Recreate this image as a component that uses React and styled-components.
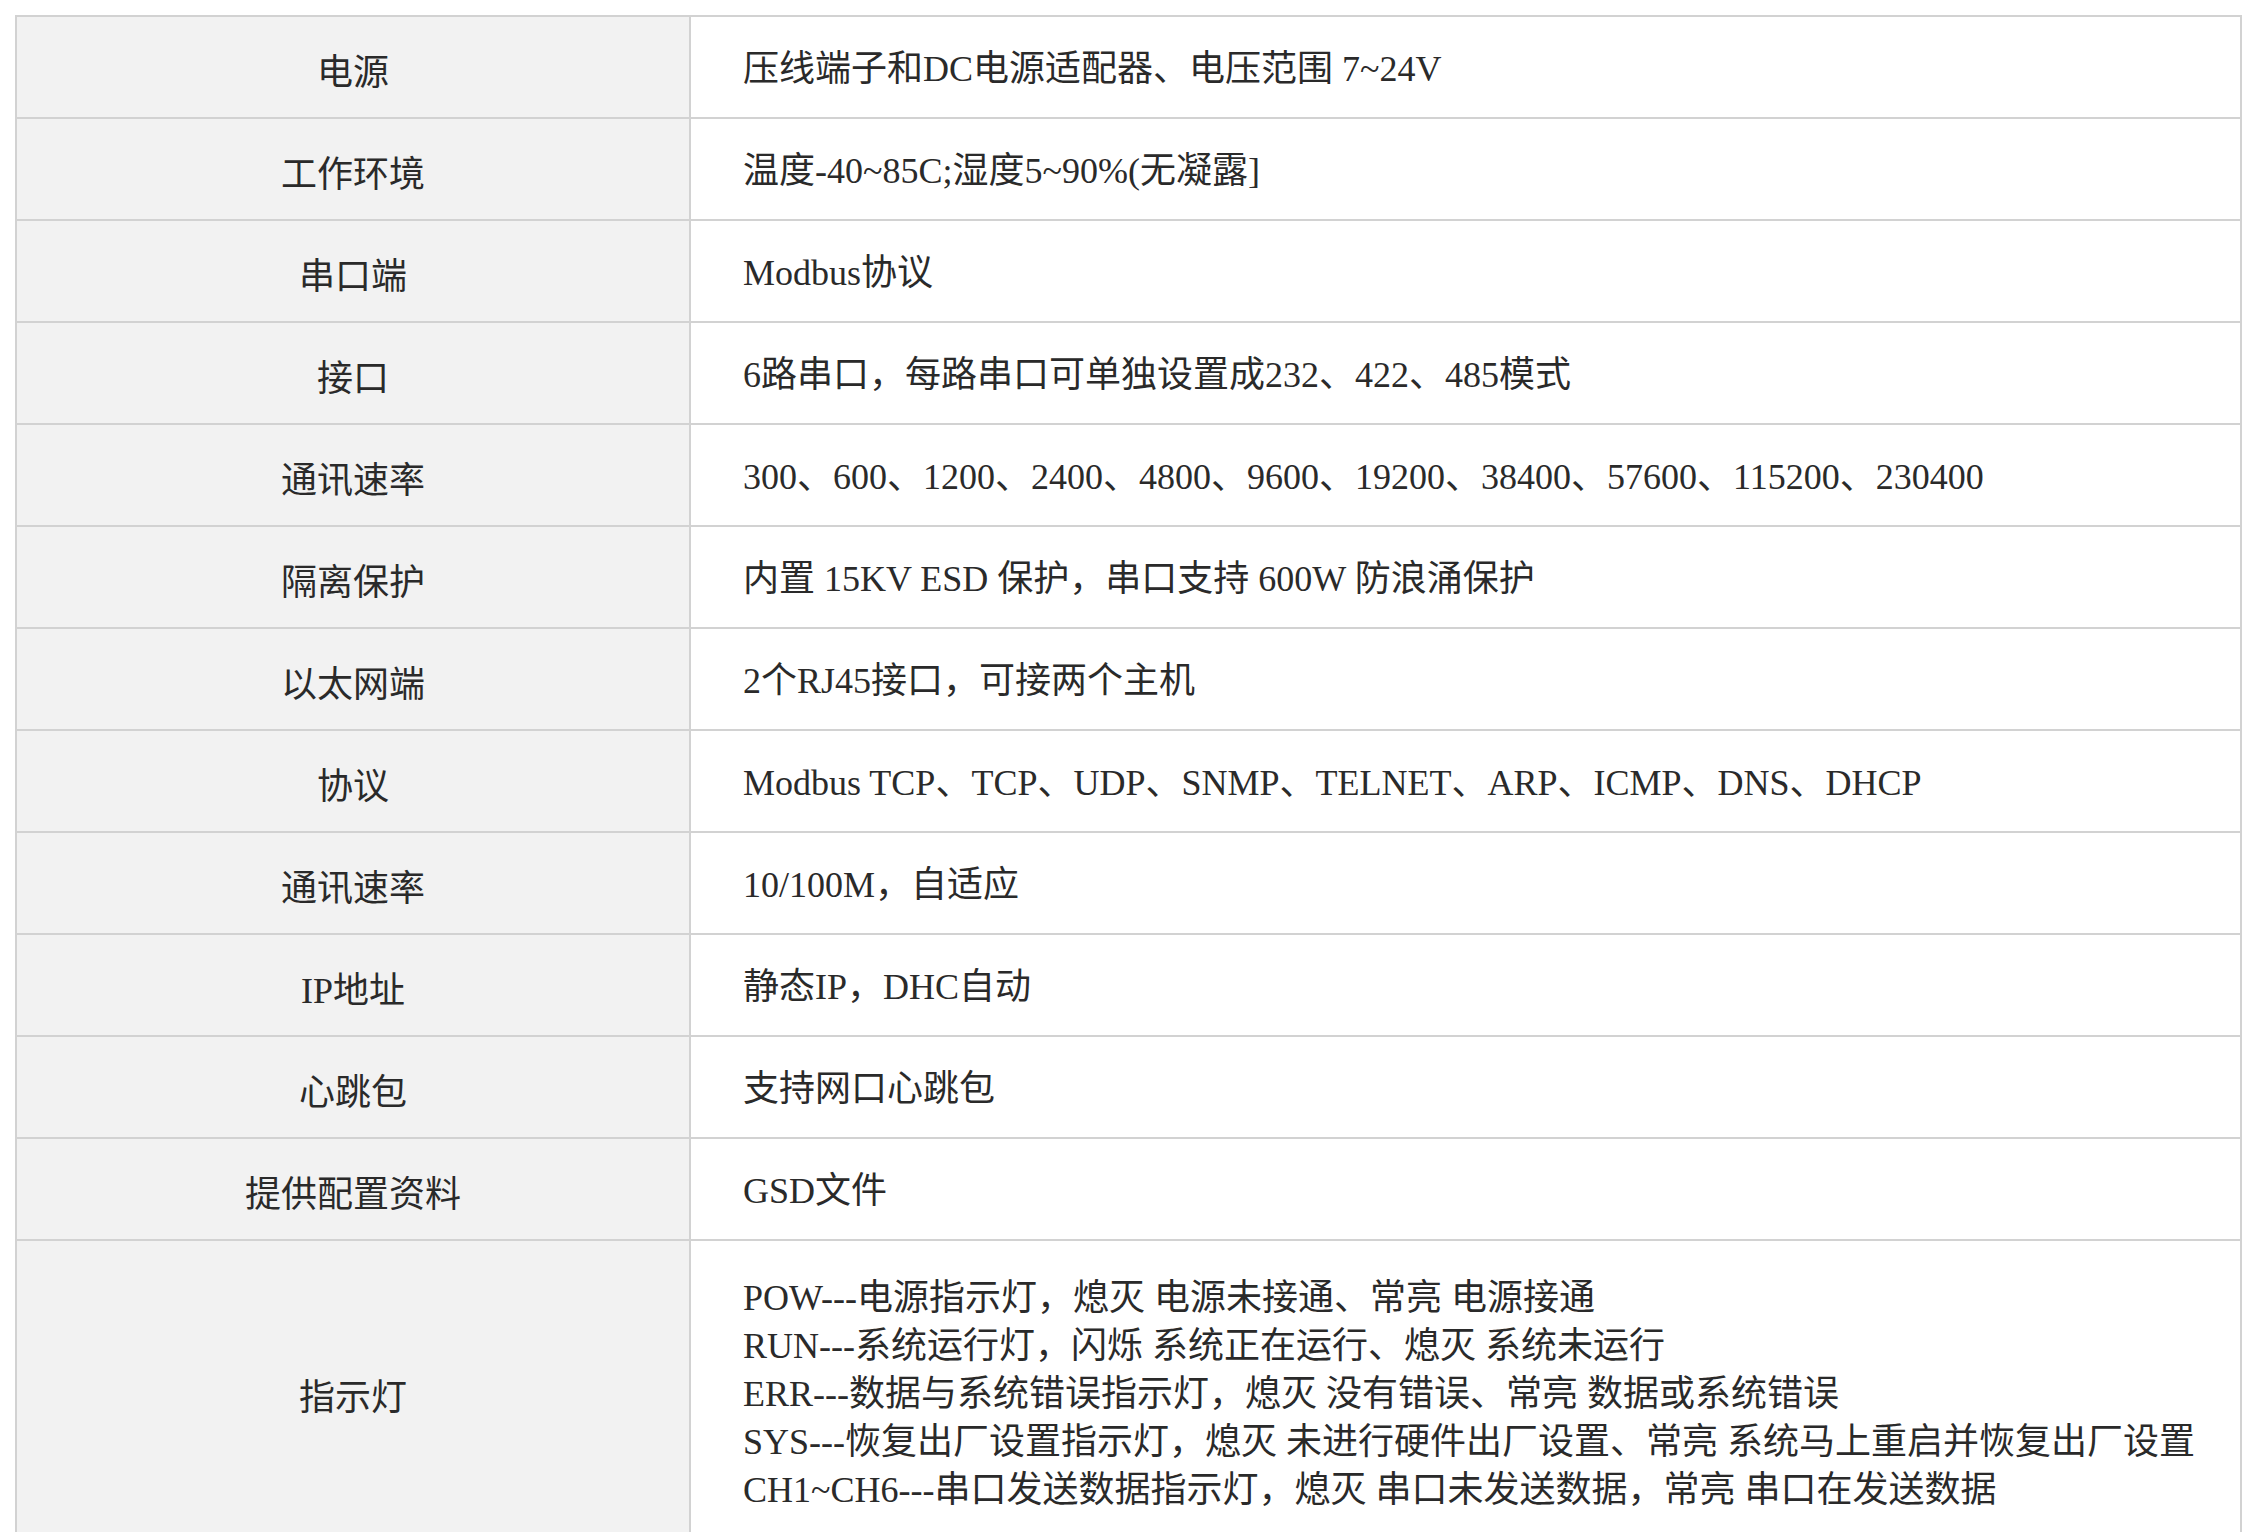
import React from "react";
import styled, { createGlobalStyle } from "styled-components";

const G = createGlobalStyle`
  body { margin: 0; background: #fff; }
`;
const Wrap = styled.div`padding: 15px 18px 0 15px;`;
const Table = styled.table`
  width: 100%;
  border-collapse: collapse;
  font-family: "Liberation Serif", "Noto Sans CJK SC", serif;
  font-size: 36px;
  color: #2a2a2a;
  border: 2px solid #d2d2d2;
`;
const Th = styled.td`
  width: 672px;
  background: #f2f2f2;
  text-align: center;
  border: 2px solid #d2d2d2;
  height: ${p => p.$h || 96}px;
  padding: 4px 0 0;
`;
const Td = styled.td`
  border: 2px solid #d2d2d2;
  padding: 4px 20px 0 52px;
  line-height: 48px;
`;
const rows = [
  ["电源", "压线端子和DC电源适配器、电压范围 7~24V"],
  ["工作环境", "温度-40~85C;湿度5~90%(无凝露]"],
  ["串口端", "Modbus协议"],
  ["接口", "6路串口，每路串口可单独设置成232、422、485模式"],
  ["通讯速率", "300、600、1200、2400、4800、9600、19200、38400、57600、115200、230400"],
  ["隔离保护", "内置 15KV ESD 保护，串口支持 600W 防浪涌保护"],
  ["以太网端", "2个RJ45接口，可接两个主机"],
  ["协议", "Modbus TCP、TCP、UDP、SNMP、TELNET、ARP、ICMP、DNS、DHCP"],
  ["通讯速率", "10/100M，自适应"],
  ["IP地址", "静态IP，DHC自动"],
  ["心跳包", "支持网口心跳包"],
  ["提供配置资料", "GSD文件"],
];
const leds = [
  "POW---电源指示灯，熄灭 电源未接通、常亮 电源接通",
  "RUN---系统运行灯，闪烁 系统正在运行、熄灭 系统未运行",
  "ERR---数据与系统错误指示灯，熄灭 没有错误、常亮 数据或系统错误",
  "SYS---恢复出厂设置指示灯，熄灭 未进行硬件出厂设置、常亮 系统马上重启并恢复出厂设置",
  "CH1~CH6---串口发送数据指示灯，熄灭 串口未发送数据，常亮 串口在发送数据",
];
export default function App() {
  return (
    <Wrap>
      <G />
      <Table>
        <tbody>
          {rows.map(([a, b], i) => (
            <tr key={i}><Th>{a}</Th><Td>{b}</Td></tr>
          ))}
          <tr>
            <Th $h={298}>指示灯</Th>
            <Td>{leds.map((l, i) => <div key={i}>{l}</div>)}</Td>
          </tr>
        </tbody>
      </Table>
    </Wrap>
  );
}
